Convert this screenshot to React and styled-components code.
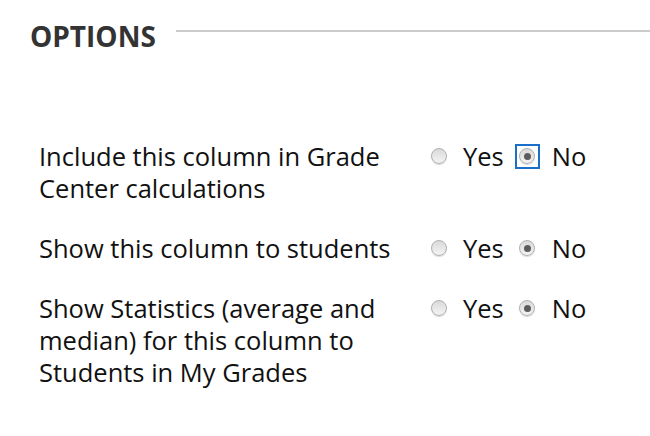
import React from "react";
import styled, { createGlobalStyle } from "styled-components";

const GlobalStyle = createGlobalStyle`
    html, body {
        margin: 0;
        padding: 0;
        background: #fff;
    }
    body {
        font-family: "Open Sans", "Liberation Sans", sans-serif;
        color: #111;
    }
`;

const Page = styled.div`
    width: 650px;
    height: 436px;
    padding: 14px 0 0 30px;
    box-sizing: border-box;
    overflow: hidden;
`;

const Header = styled.div`
    display: flex;
    align-items: center;
    gap: 20px;
    height: 44px;
`;

const HeaderTitle = styled.h2`
    margin: 0;
    font-size: 28px;
    font-weight: 700;
    color: #333;
    line-height: 44px;
`;

const HeaderRule = styled.div`
    flex: 1;
    height: 2px;
    background: #cccccc;
    margin-top: -10px;
`;

const OptionList = styled.div`
    display: flex;
    flex-direction: column;
    gap: 28px;
    padding: 82px 0 0 9px;
`;

const OptionRow = styled.div`
    display: flex;
    align-items: flex-start;
`;

const OptionLabel = styled.div`
    width: 387px;
    font-size: 25.5px;
    line-height: 32px;
    color: #111;
`;

const Choices = styled.div`
    display: flex;
    align-items: center;
    height: 32px;
`;

const Choice = styled.label`
    display: flex;
    align-items: center;
    font-size: 25.5px;
    line-height: 32px;
    color: #111;
    margin-right: 11px;
`;

const FocusRing = styled.span`
    display: inline-flex;
    align-items: center;
    justify-content: center;
    flex-shrink: 0;
    width: 25px;
    height: 25px;
    box-sizing: border-box;
    margin-right: 12px;
    border: 2px solid ${(p) => (p.$focused ? "#1a6fc9" : "transparent")};
`;

const Radio = styled.span`
    flex-shrink: 0;
    width: 16px;
    height: 16px;
    border-radius: 50%;
    box-sizing: border-box;
    border: 1px solid #b0b0b0;
    background: linear-gradient(#d9d9d9, #f4f4f4);
    box-shadow: 0 1px 1px rgba(0, 0, 0, 0.15);
    display: flex;
    align-items: center;
    justify-content: center;

    &::after {
        content: "";
        width: 7px;
        height: 7px;
        border-radius: 50%;
        background: #5c5c5c;
        display: ${(p) => (p.$checked ? "block" : "none")};
    }
`;

const options = [
    { label: "Include this column in Grade Center calculations", focused: true },
    { label: "Show this column to students" },
    { label: "Show Statistics (average and median) for this column to Students in My Grades" },
];

const App = () => {
    return (
        <>
            <GlobalStyle />
            <Page>
                <Header>
                    <HeaderTitle>OPTIONS</HeaderTitle>
                    <HeaderRule />
                </Header>
                <OptionList>
                    {options.map((opt) => (
                        <OptionRow key={opt.label}>
                            <OptionLabel>{opt.label}</OptionLabel>
                            <Choices>
                                <Choice>
                                    <FocusRing>
                                        <Radio />
                                    </FocusRing>
                                    Yes
                                </Choice>
                                <Choice>
                                    <FocusRing $focused={opt.focused}>
                                        <Radio $checked />
                                    </FocusRing>
                                    No
                                </Choice>
                            </Choices>
                        </OptionRow>
                    ))}
                </OptionList>
            </Page>
        </>
    );
};

export default App;
